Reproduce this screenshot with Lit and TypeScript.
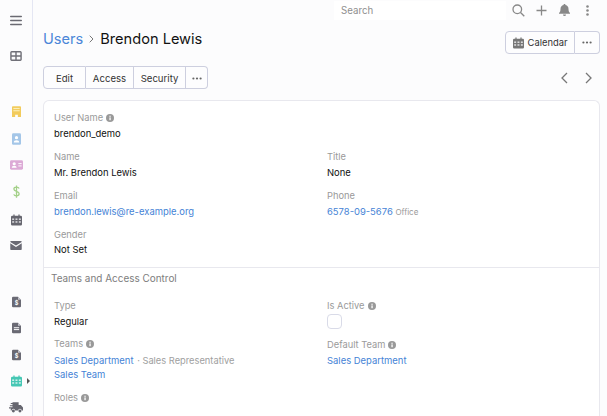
import { LitElement, html, css, svg } from "lit";
import { customElement } from "lit/decorators.js";

const info = html`<svg class="info" viewBox="0 0 8 8"><circle cx="4" cy="4" r="4" fill="#999"/><rect x="3.4" y="3.4" width="1.3" height="2.8" fill="#fff"/><rect x="3.4" y="1.7" width="1.3" height="1.1" fill="#fff"/></svg>`;
const dots = html`<svg class="dots" viewBox="0 0 10 3"><circle cx="1.4" cy="1.5" r="1.1"/><circle cx="5" cy="1.5" r="1.1"/><circle cx="8.6" cy="1.5" r="1.1"/></svg>`;
const cal = (c: string) => svg`<path fill="${c}" d="M3 0h1.6v1.6h4.8V0H11v1.6h1.500A1.500 1.500 0 0 1 14 3.100v9.400a1.500 1.500 0 0 1-1.500 1.500h-11A1.500 1.500 0 0 1 0 12.500V3.100A1.500 1.500 0 0 1 1.500 1.600H3z"/><g fill="#fcfcfd" fill-opacity=".75"><rect x="1.500" y="5" width="2.500" height="2"/><rect x="5.700" y="5" width="2.500" height="2"/><rect x="10" y="5" width="2.500" height="2"/><rect x="1.500" y="8.500" width="2.500" height="2"/><rect x="5.700" y="8.500" width="2.500" height="2"/><rect x="10" y="8.500" width="2.500" height="2"/></g>`;
const doc = (inner: unknown) => svg`<path fill="#6a6a74" d="M1.500 0H8l4 4v8.500A1.500 1.500 0 0 1 10.500 14h-9A1.500 1.500 0 0 1 0 12.500v-11A1.500 1.500 0 0 1 1.500 0z"/><path fill="#c4c4cc" d="M8 0l4 4H8z"/>${inner}`;
const dollar = svg`<text x="6" y="11.500" font-size="7.500" font-weight="700" text-anchor="middle" fill="#fff" font-family="Inter">$</text>`;
const lines = svg`<g fill="#fff"><rect x="2.500" y="6" width="7" height="1.300"/><rect x="2.500" y="8.500" width="7" height="1.300"/></g>`;

const sideIcons = [
  { cls: "i1", vb: "0 0 14 12", w: 12, h: 11, c: svg`<g fill="#6a6a72"><rect y="0.500" width="14" height="1.700" rx=".8"/><rect y="5.200" width="14" height="1.700" rx=".8"/><rect y="9.800" width="14" height="1.700" rx=".8"/></g>` },
  { cls: "i2", vb: "0 0 14 12", w: 12, h: 10, c: svg`<path fill="none" stroke="#707078" stroke-width="1.700" d="M1.800.9h10.400a1 1 0 0 1 .9.900v8.400a1 1 0 0 1-.9.900H1.800a1 1 0 0 1-.9-.900V1.800a1 1 0 0 1 .9-.9zM.9 6h12.200M7 .9v10.200"/>` },
  { cls: "i3", vb: "0 0 10 13", w: 9, h: 12, c: svg`<path fill="#f2cb5c" d="M1 0h8a1 1 0 0 1 1 1v11H6.500v-2.500h-3V12H0V1a1 1 0 0 1 1-1z"/><g fill="#fbeeb8"><rect x="1.500" y="2" width="7" height="1.200"/><rect x="1.500" y="4.500" width="7" height="1.200"/></g>` },
  { cls: "i4", vb: "0 0 10 13", w: 9, h: 12, c: svg`<rect width="10" height="13" rx="1.500" fill="#a4c6e8"/><circle cx="5" cy="5" r="1.800" fill="#fff"/><path fill="#fff" d="M2 10.500a3 2.600 0 0 1 6 0z"/>` },
  { cls: "i5", vb: "0 0 14 10", w: 13, h: 10, c: svg`<rect width="14" height="10" rx="1.500" fill="#dcaad6"/><circle cx="4.500" cy="3.700" r="1.700" fill="#fff"/><path fill="#fff" d="M1.800 8a2.700 2.300 0 0 1 5.400 0z"/><rect x="9" y="3" width="3.500" height="1" fill="#fff"/><rect x="9" y="5.500" width="3.500" height="1" fill="#fff"/>` },
  { cls: "i6", vb: "0 0 8 14", w: 7, h: 13, c: svg`<path fill="none" stroke="#a3d088" stroke-width="1.500" d="M7 3.500C6.500 2.300 5.500 2 4 2 2.300 2 1 2.700 1 4.100 1 5.500 2.300 6.200 4 6.800 5.700 7.400 7 8 7 9.700 7 11.200 5.600 12 4 12 2.400 12 1.300 11.500.9 10.300M4 0v14"/>` },
  { cls: "i7", vb: "0 0 14 14", w: 11, h: 12, c: cal("#66666f") },
  { cls: "i8", vb: "0 0 14 11", w: 12, h: 9, c: svg`<path fill="#6a6a74" d="M1.200 0h11.600c.6 0 1.200.5 1.200 1.100L7 5.600 0 1.100C0 .5.600 0 1.200 0zM0 2.700l7 4.500 7-4.500v7.100c0 .7-.5 1.200-1.200 1.200H1.200C.5 11 0 10.500 0 9.800z"/>` },
  { cls: "i9", vb: "0 0 12 14", w: 9, h: 12, c: doc(dollar) },
  { cls: "i10", vb: "0 0 12 14", w: 9, h: 12, c: doc(lines) },
  { cls: "i11", vb: "0 0 12 14", w: 9, h: 12, c: doc(dollar) },
  { cls: "i12 cur", vb: "0 0 14 14", w: 11, h: 12, c: cal("#45c7b4") },
  { cls: "i13", vb: "0 0 16 12", w: 14, h: 11, c: svg`<path fill="#66666f" d="M4 0h7v3h2.500L16 6v3.500h-1.500a2 2 0 0 0-4 0H7a2 2 0 0 0-4 0H2V7H0V5.700h4V4.500H1V3.300h3V2H2V.8h2z"/><circle cx="5" cy="10" r="1.700" fill="#66666f"/><circle cx="12.500" cy="10" r="1.700" fill="#66666f"/>` },
];

@customElement("app-root")
export class AppRoot extends LitElement {
  static styles = css`
    :host { display: block; width: 607px; height: 416px; overflow: hidden; background: #fcfcfd; font-family: Inter, sans-serif; font-size: 9.400px; color: #111; }
    .page { display: flex; height: 416px; overflow: hidden; }
    .side { width: 32px; flex: none; border-right: 1px solid #e4e6f3; display: flex; flex-direction: column; align-items: center; box-sizing: content-box; }
    .si { flex: none; height: 16px; display: flex; align-items: center; justify-content: center; position: relative; width: 32px; }
    .i1 { margin-top: 12px; }
    .i2 { margin-top: 20px; }
    .i3 { margin-top: 40px; }
    .i4, .i5, .i6, .i8, .i10, .i11, .i12, .i13 { margin-top: 10.500px; }
    .i7 { margin-top: 12px; }
    .i8 { margin-top: 10px; }
    .i9 { margin-top: 40px; }
    .cur::after { content: ""; position: absolute; left: 27px; top: 5px; border-left: 3px solid #555; border-top: 3px solid transparent; border-bottom: 3px solid transparent; }
    .main { flex: 1; min-width: 0; display: flex; flex-direction: column; padding: 0 7px 0 10px; }
    .top { display: flex; align-items: center; height: 20px; margin-top: 0; padding-left: 291px; }
    .search { width: 172px; height: 19px; box-sizing: border-box; background: #fff; color: #8f8f8f; padding: 0 7px; line-height: 20px; font-size: 9.700px; }
    .ticons { display: flex; margin-left: 0.500px; }
    .ticons span { width: 23px; display: flex; justify-content: center; align-items: center; height: 18px; }
    .head { display: flex; justify-content: space-between; align-items: flex-start; margin-top: 11px; height: 23px; }
    h1 { margin: 0; padding-top: 1px; font-size: 14.600px; font-weight: 400; line-height: 14px; color: #111; display: flex; align-items: center; }
    h1 a { color: #4a86d8; }
    .chev { margin: 0 6px 0 6px; }
    .cbar { display: flex; }
    .btn { display: flex; align-items: center; justify-content: center; border: 1px solid #cdcfdf; background: #fdfdfe; box-sizing: border-box; height: 23px; color: #333; font-size: 9.400px; gap: 4px; }
    .dots { width: 10px; height: 3px; fill: #666; }
    .cbar .a { width: 70px; border-radius: 4px 0 0 4px; }
    .cbar .b { width: 25px; border-left: 0; border-radius: 0 4px 4px 0; }
    .acts { display: flex; justify-content: space-between; align-items: center; margin-top: 12px; height: 23px; }
    .grp { display: flex; }
    .grp .btn { padding-top: 1px; font-size: 9.600px; }
    .grp .btn + .btn { border-left: 0; }
    .grp .btn:first-child { border-radius: 4px 0 0 4px; }
    .grp .btn:last-child { border-radius: 0 4px 4px 0; }
    .nav { display: flex; gap: 17px; padding-right: 7px; align-items: center; }
    .panel { margin-top: 11px; flex: 1; background: #fff; border: 1px solid #e8e8ee; border-bottom: 0; border-radius: 6px 6px 0 0; padding-top: 10px; }
    .grid { display: grid; grid-template-columns: 273px 1fr; padding-left: 10px; }
    .f { height: 39px; line-height: 13px; }
    .lab { color: #9a9a9a; display: flex; align-items: center; gap: 3px; height: 13px; font-size: 9.300px; }
    .val { color: #111; margin-top: 3px; height: 13px; line-height: 13px; font-size: 9.450px; }
    .val.tight { margin-top: 2px; }
    .info { width: 8px; height: 8px; }
    a { color: #4583d6; text-decoration: none; }
    .sub { color: #9a9a9a; font-size: 8px; }
    .mut { color: #a0a0a0; font-size: 9.300px; margin-left: 1px; }
    .sec { border-top: 1px solid #e8e8ee; padding-top: 3px; }
    .sec h2 { margin: 0 0 0 7px; color: #7d7d7d; font-size: 9.950px; font-weight: 400; line-height: 14px; }
    .cols { display: grid; grid-template-columns: 273px 1fr; padding-left: 10px; margin-top: 14px; }
    .check { display: block; width: 15px; height: 15px; box-sizing: border-box; border: 1px solid #d9dbe8; border-radius: 4px; margin-top: 2px; background: #fff; }
    .two { margin-top: 4px; }
    .two .val { margin-top: 1px; }
    .gap23 { height: 38px; }
    .gap54 { height: 54px; }
    .gapR { height: 39px; }
  `;

  render() {
    return html`<div class="page">
      <nav class="side">
        ${sideIcons.map((s) => html`<div class="si ${s.cls}"><svg width=${s.w} height=${s.h} viewBox=${s.vb}>${s.c}</svg></div>`)}
      </nav>
      <main class="main">
        <div class="top">
          <div class="search">Search</div>
          <div class="ticons">
            <span><svg width="13" height="13" viewBox="0 0 13 13" fill="none" stroke="#888" stroke-width="1.300"><circle cx="5.300" cy="5.300" r="4.300"/><path d="M8.500 8.500L12.300 12.300"/></svg></span>
            <span><svg width="11" height="11" viewBox="0 0 11 11" stroke="#888" stroke-width="1.300"><path d="M5.500 .5v10M.5 5.500h10"/></svg></span>
            <span><svg width="11" height="12" viewBox="0 0 11 12" fill="#888"><path d="M5.500 0c.6 0 1 .4 1 1 2 .4 3 2 3 4 0 2 .5 3 1.500 4v.8H0V9c1-1 1.500-2 1.500-4 0-2 1-3.600 3-4 0-.6.400-1 1-1z"/><path d="M4 10.500h3a1.500 1.500 0 0 1-3 0z"/></svg></span>
            <span><svg width="3" height="11" viewBox="0 0 3 11" fill="#888"><circle cx="1.500" cy="1.500" r="1.300"/><circle cx="1.500" cy="5.500" r="1.300"/><circle cx="1.500" cy="9.500" r="1.300"/></svg></span>
          </div>
        </div>
        <div class="head">
          <h1><a>Users</a><svg class="chev" width="5" height="8" viewBox="0 0 5 8" fill="none" stroke="#777" stroke-width="1"><path d="M.7 .7L4 4 .7 7.300"/></svg>Brendon Lewis</h1>
          <div class="cbar">
            <div class="btn a"><svg width="11" height="12" viewBox="0 0 14 14">${cal("#777")}</svg>Calendar</div>
            <div class="btn b">${dots}</div>
          </div>
        </div>
        <div class="acts">
          <div class="grp">
            <div class="btn" style="width:43px">Edit</div>
            <div class="btn" style="width:48px">Access</div>
            <div class="btn" style="width:52px">Security</div>
            <div class="btn" style="width:22px">${dots}</div>
          </div>
          <div class="nav">
            <svg width="8" height="12" viewBox="0 0 8 12" fill="none" stroke="#777" stroke-width="1.300"><path d="M7 1L2 6l5 5"/></svg>
            <svg width="8" height="12" viewBox="0 0 8 12" fill="none" stroke="#777" stroke-width="1.300"><path d="M1 1l5 5-5 5"/></svg>
          </div>
        </div>
        <section class="panel">
          <div class="grid">
            <div class="f"><div class="lab">User Name ${info}</div><div class="val">brendon_demo</div></div><div></div>
            <div class="f"><div class="lab">Name</div><div class="val">Mr. Brendon Lewis</div></div>
            <div class="f"><div class="lab">Title</div><div class="val">None</div></div>
            <div class="f"><div class="lab">Email</div><div class="val"><a>brendon.lewis@re-example.org</a></div></div>
            <div class="f"><div class="lab">Phone</div><div class="val"><a>6578-09-5676</a> <span class="sub">Office</span></div></div>
            <div class="f"><div class="lab">Gender</div><div class="val tight">Not Set</div></div><div></div>
          </div>
          <div class="sec">
            <h2>Teams and Access Control</h2>
            <div class="cols">
              <div>
                <div class="gap23"><div class="lab">Type</div><div class="val">Regular</div></div>
                <div class="gap54"><div class="lab">Teams ${info}</div><div class="two"><div class="val"><a>Sales Department</a> <span class="mut">· Sales Representative</span></div><div class="val"><a>Sales Team</a></div></div></div>
                <div><div class="lab">Roles ${info}</div></div>
              </div>
              <div>
                <div class="gapR"><div class="lab">Is Active ${info}</div><span class="check"></span></div>
                <div><div class="lab">Default Team ${info}</div><div class="val"><a>Sales Department</a></div></div>
              </div>
            </div>
          </div>
        </section>
      </main>
    </div>`;
  }
}
